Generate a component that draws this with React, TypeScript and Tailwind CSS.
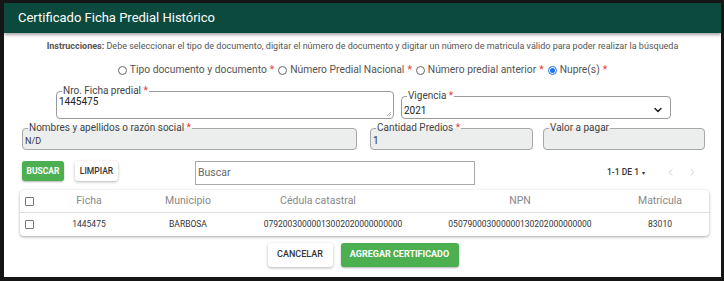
import { ChevronDown, ChevronLeft, ChevronRight } from 'lucide-react';

const font = { fontFamily: 'Roboto, "Liberation Sans", sans-serif' };

function Legend({ label, required }: { label: string; required?: boolean }) {
  return (
    <legend className="ml-[3px] px-[1px] text-[10px] leading-[10px] text-[#444]">
      {label}
      {required && <span className="text-[#e53935]"> *</span>}
    </legend>
  );
}

function Radio({ label, checked }: { label: string; checked?: boolean }) {
  return (
    <label className="flex items-center gap-[3px]">
      <span
        className={
          'flex h-[9px] w-[9px] items-center justify-center rounded-full border ' +
          (checked ? 'border-[#1a73e8]' : 'border-[#666]')
        }
      >
        {checked && <span className="h-[5px] w-[5px] rounded-full bg-[#1a73e8]" />}
      </span>
      <span>{label}</span>
      <span className="text-[#e53935]">*</span>
    </label>
  );
}

function Check() {
  return <span className="block h-[9px] w-[9px] rounded-[1px] border border-[#777]" />;
}

const cols = 'grid-cols-[40px_58px_140px_150px_224px_56px_1fr]';

export default function App() {
  return (
    <div
      style={font}
      className="h-[281px] w-[724px] overflow-hidden border-b-4 border-l-4 border-r-[3px] border-t-[3px] border-[#151515] bg-white"
    >
      <div className="flex h-[30px] items-center bg-[#0c4a3d] pl-[14px] text-[13px] text-white shadow-[0_2px_3px_rgba(0,0,0,0.35)]">
        Certificado Ficha Predial Histórico
      </div>

      <p className="mt-[7px] whitespace-nowrap text-center text-[9px] leading-[12px] text-[#555]">
        <span className="font-bold">Instrucciones:</span> Debe seleccionar el tipo de documento, digitar el número de
        documento y digitar un número de matricula válido para poder realizar la búsqueda
      </p>

      <div className="mt-[11px] flex h-[14px] justify-center gap-[4px] text-[10.3px] leading-[14px] text-[#555]">
        <Radio label="Tipo documento y documento" />
        <Radio label="Número Predial Nacional" />
        <Radio label="Número predial anterior" />
        <Radio label="Nupre(s)" checked />
      </div>

      <div className="mt-[9px] flex items-start gap-[7px] pl-[52px]">
        <fieldset className="relative h-[33px] w-[338px] rounded-[4px] border border-[#9a9a9a] px-[2px]">
          <Legend label="Nro. Ficha predial" required />
          <div className="text-[10px] leading-[12px] text-[#222]">1445475</div>
          <svg className="absolute bottom-[1px] right-[1px]" width="6" height="6" viewBox="0 0 6 6">
            <path d="M5 1 1 5M5 3 3 5" stroke="#999" strokeWidth="0.8" />
          </svg>
        </fieldset>
        <fieldset className="mt-[5px] h-[28px] w-[270px] rounded-[4px] border border-[#9a9a9a] px-[2px]">
          <Legend label="Vigencia" required />
          <div className="mt-[2px] flex items-center justify-between text-[10px] leading-[12px] text-[#222]">
            <span className="mt-[2px]">2021</span>
            <ChevronDown size={12} strokeWidth={3} className="mr-[4px] text-[#222]" />
          </div>
        </fieldset>
      </div>

      <div className="mt-[4px] flex pl-[18px]">
        <fieldset className="h-[27px] w-[335px] rounded-[4px] border border-[#a8a8a8] bg-[#eceeed] px-[2px]">
          <Legend label="Nombres y apellidos o razón social" required />
          <div className="mt-[2px] text-[9px] leading-[12px] text-[#333]">N/D</div>
        </fieldset>
        <fieldset className="ml-[13px] h-[27px] w-[163px] rounded-[4px] border border-[#a8a8a8] bg-[#eceeed] px-[2px]">
          <Legend label="Cantidad Predios" required />
          <div className="mt-[2px] text-[10px] leading-[12px] text-[#333]">1</div>
        </fieldset>
        <fieldset className="ml-[10px] h-[27px] w-[162px] rounded-[4px] border border-[#a8a8a8] bg-[#eceeed] px-[2px]">
          <Legend label="Valor a pagar" />
        </fieldset>
      </div>

      <div className="mt-[11px] flex items-start pl-[18px]">
        <button className="h-[20px] w-[42px] rounded-[3px] bg-[#4caf50] text-[8.5px] font-bold text-white shadow-[0_1px_2px_rgba(0,0,0,0.3)]">
          BUSCAR
        </button>
        <button className="ml-[11px] h-[20px] w-[43px] rounded-[3px] bg-white text-[8.5px] font-medium text-[#333] shadow-[0_1px_3px_rgba(0,0,0,0.3)]">
          LIMPIAR
        </button>
        <div className="ml-[77px] flex h-[24px] w-[280px] items-center border border-[#aaa] px-[2px] text-[10.5px] text-[#666]">
          Buscar
        </div>
        <div className="ml-[132px] mt-[5px] flex items-center text-[8.5px] font-medium text-[#333]">
          <span>1-1 DE 1</span>
          <span className="ml-[3px] text-[6px]">▾</span>
          <ChevronLeft size={11} className="ml-[20px] text-[#ccc]" />
          <ChevronRight size={11} className="ml-[11px] text-[#ccc]" />
        </div>
      </div>

      <div className="ml-[16px] mt-[5px] w-[689px] rounded-[4px] bg-white shadow-[0_1px_3px_rgba(0,0,0,0.35)]">
        <div className={'grid h-[23px] items-center border-b border-[#ddd] text-[10.5px] text-[#888] ' + cols}>
          <span className="pl-[5px]">
            <Check />
          </span>
          <span className="text-center">Ficha</span>
          <span className="text-center">Municipio</span>
          <span className="pr-[30px] text-center">Cédula catastral</span>
          <span className="text-center">NPN</span>
          <span className="text-center">Matrícula</span>
          <span />
        </div>
        <div className={'grid h-[23px] items-center text-[8.5px] text-[#333] ' + cols}>
          <span className="pl-[5px]">
            <Check />
          </span>
          <span className="text-center">1445475</span>
          <span className="text-center">BARBOSA</span>
          <span className="text-center">07920030000013002020000000000</span>
          <span className="text-center">050790003000000130202000000000</span>
          <span className="text-center">83010</span>
          <span />
        </div>
      </div>

      <div className="mt-[7px] flex justify-center gap-[8px]">
        <button className="ml-[1px] h-[24px] w-[65px] rounded-[3px] bg-white text-[9px] font-medium text-[#333] shadow-[0_1px_3px_rgba(0,0,0,0.3)]">
          CANCELAR
        </button>
        <button className="h-[24px] w-[118px] rounded-[3px] bg-[#4caf50] text-[9px] font-bold text-white shadow-[0_1px_2px_rgba(0,0,0,0.3)]">
          AGREGAR CERTIFICADO
        </button>
      </div>
    </div>
  );
}
